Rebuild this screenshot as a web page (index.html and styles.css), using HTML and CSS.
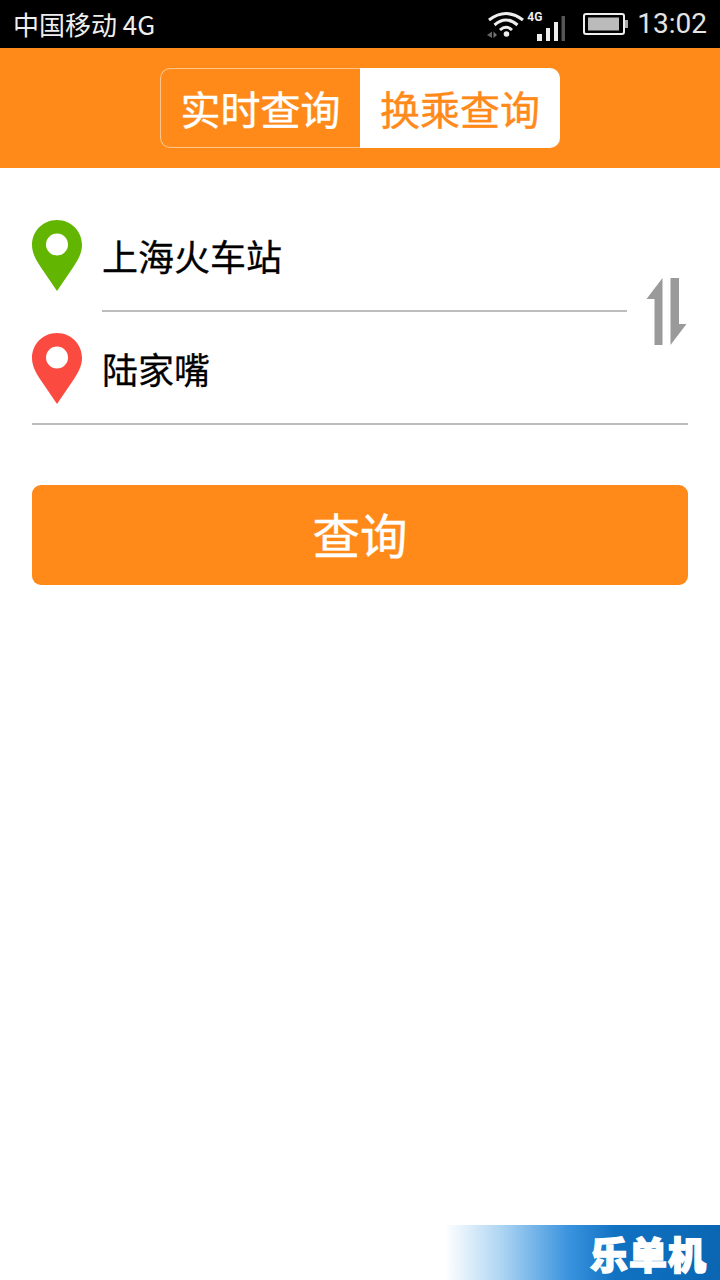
FILE: index.html
```html
<!DOCTYPE html>
<html lang="zh-CN">
<head>
<meta charset="utf-8">
<title>换乘查询</title>
<link rel="stylesheet" href="styles.css">
</head>
<body>
<div class="status-bar">
  <span class="carrier">中国移动 4G</span>
  <div class="status-icons">
    <svg class="wifi" width="40" height="30" viewBox="0 0 40 30">
      <path d="M3 12 Q20 -1 37 12" fill="none" stroke="#eee" stroke-width="3"/>
      <path d="M8.500 17 Q20 7 31.500 17" fill="none" stroke="#eee" stroke-width="3"/>
      <path d="M14 22 Q20 16.500 26 22" fill="none" stroke="#eee" stroke-width="3"/>
      <circle cx="20.500" cy="26" r="2.800" fill="#eee"/>
      <path d="M1 27 L6 23.500 V30 Z" fill="#666"/>
      <path d="M7.500 23.500 L11 27 L7.500 30 Z" fill="#777"/>
    </svg>
    <div class="signal">
      <span class="net">4G</span>
      <svg width="30" height="27" viewBox="0 0 30 27">
        <rect x="1" y="18" width="5" height="7" fill="#eee"/>
        <rect x="10" y="12" width="4" height="13" fill="#eee"/>
        <rect x="18" y="6" width="4" height="19" fill="#eee"/>
        <rect x="25.500" y="0" width="3.500" height="25" fill="#555"/>
      </svg>
    </div>
    <svg class="battery" width="46" height="24" viewBox="0 0 46 24">
      <rect x="1" y="2" width="40" height="20" rx="2" fill="none" stroke="#eee" stroke-width="2"/>
      <rect x="5" y="5.500" width="31" height="13" fill="#bbb"/>
      <rect x="42" y="8" width="3" height="8" fill="#aaa"/>
    </svg>
    <span class="clock">13:02</span>
  </div>
</div>
<header class="app-header">
  <div class="segmented">
    <div class="seg seg-off">实时查询</div>
    <div class="seg seg-on">换乘查询</div>
  </div>
</header>
<main class="form">
  <div class="route">
    <div class="stop stop-from">
      <svg class="pin" width="50" height="71" viewBox="0 0 50 71">
        <path fill-rule="evenodd" fill="#62b500" d="M25 0C11 0 0 11 0 25C0 33 4 40 9 47.500L25 71L41 47.500C46 40 50 33 50 25C50 11 39 0 25 0ZM25 13.500A11 11 0 1 1 25 35.500A11 11 0 1 1 25 13.500Z"/>
      </svg>
      <div class="field">上海火车站</div>
    </div>
    <svg class="swap" width="42" height="68" viewBox="0 0 42 68">
      <path fill="#9a9a9a" d="M16.500 0V67H8.500V21H0.500Z"/>
      <path fill="#9a9a9a" d="M24.500 0H33V46H40.500L24.500 67Z"/>
    </svg>
    <div class="stop stop-to">
      <svg class="pin" width="50" height="71" viewBox="0 0 50 71">
        <path fill-rule="evenodd" fill="#fb4a40" d="M25 0C11 0 0 11 0 25C0 33 4 40 9 47.500L25 71L41 47.500C46 40 50 33 50 25C50 11 39 0 25 0ZM25 13.500A11 11 0 1 1 25 35.500A11 11 0 1 1 25 13.500Z"/>
      </svg>
      <div class="field">陆家嘴</div>
    </div>
  </div>
  <button class="query"><span class="query-label">查询</span></button>
</main>
<div class="watermark"><span>乐单机</span></div>
</body>
</html>
```
FILE: styles.css
```css
* { box-sizing: border-box; }
html, body { margin: 0; padding: 0; }
body {
  position: relative;
  width: 720px;
  height: 1280px;
  overflow: hidden;
  background: #fff;
  font-family: "Noto Sans CJK SC", "Noto Sans", sans-serif;
}
.status-bar {
  height: 48px;
  background: #000;
  color: #eee;
  display: flex;
  align-items: center;
  justify-content: space-between;
  padding: 0 13px;
}
.carrier { font-size: 26px; line-height: 48px; }
.status-icons { display: flex; align-items: center; }
.wifi { margin: -2px 0 0 -3px; }
.signal { position: relative; width: 30px; height: 27px; margin: 0 0 0 10px; }
.signal svg { display: block; position: absolute; left: 0; top: 5px; }
.net {
  position: absolute;
  left: -9px;
  top: 0;
  font: bold 12px/12px Roboto, sans-serif;
  color: #eee;
}
.battery { margin-left: 17px; }
.clock {
  margin-left: 8px;
  font: 28px/48px Roboto, sans-serif;
  color: #e4e4e4;
}
.app-header {
  height: 120px;
  background: #ff8a1a;
  display: flex;
  justify-content: center;
  align-items: center;
}
.segmented {
  width: 400px;
  height: 80px;
  display: flex;
}
.seg {
  flex: 0 0 200px;
  display: flex;
  align-items: center;
  justify-content: center;
  font-size: 40px;
  line-height: 76px;
  -webkit-text-stroke: 0.400px currentColor;
}
.seg-off {
  color: #fff;
  border: 1px solid #ffc68c;
  border-right: 0;
  border-radius: 10px 0 0 10px;
}
.seg-on {
  color: #ff8a1a;
  background: #fff;
  border-radius: 0 10px 10px 0;
}
.form { padding: 52px 32px 0; }
.route {
  display: grid;
  grid-template-columns: 1fr 61px;
}
.stop { display: flex; gap: 20px; }
.stop-from { grid-column: 1; grid-row: 1; height: 92px; }
.stop-to {
  grid-column: 1 / 3;
  grid-row: 2;
  height: 92px;
  margin-top: 21px;
  border-bottom: 2px solid #bdbdbd;
}
.pin { flex: none; }
.field {
  flex: 1;
  font-size: 36px;
  line-height: 71px;
  color: #000;
  -webkit-text-stroke: 0.300px #000;
}
.stop-from .field { border-bottom: 2px solid #bdbdbd; }
.swap {
  grid-column: 2;
  grid-row: 1 / 3;
  justify-self: end;
  margin-top: 58px;
}
.query {
  display: block;
  width: 656px;
  height: 100px;
  margin-top: 60px;
  padding: 0 0 4px;
  border: 0;
  border-radius: 9px;
  background: #ff8a1a;
  color: #fff;
  font-family: inherit;
  font-size: 47.500px;
  -webkit-text-stroke: 0.400px #fff;
}
.watermark {
  position: absolute;
  right: 0;
  bottom: 0;
  width: 275px;
  height: 55px;
  background: linear-gradient(90deg, #fff 0%, #b0d6f3 20%, #3a93de 45%, #1172c2 62%, #0a66b2 100%);
  display: flex;
  align-items: center;
  justify-content: flex-end;
  padding-right: 13px;
}
.watermark span {
  color: #fff;
  font-size: 38px;
  font-weight: 900;
  line-height: 50px;
  letter-spacing: 1px;
  -webkit-text-stroke: 1.500px #fff;
}
```
